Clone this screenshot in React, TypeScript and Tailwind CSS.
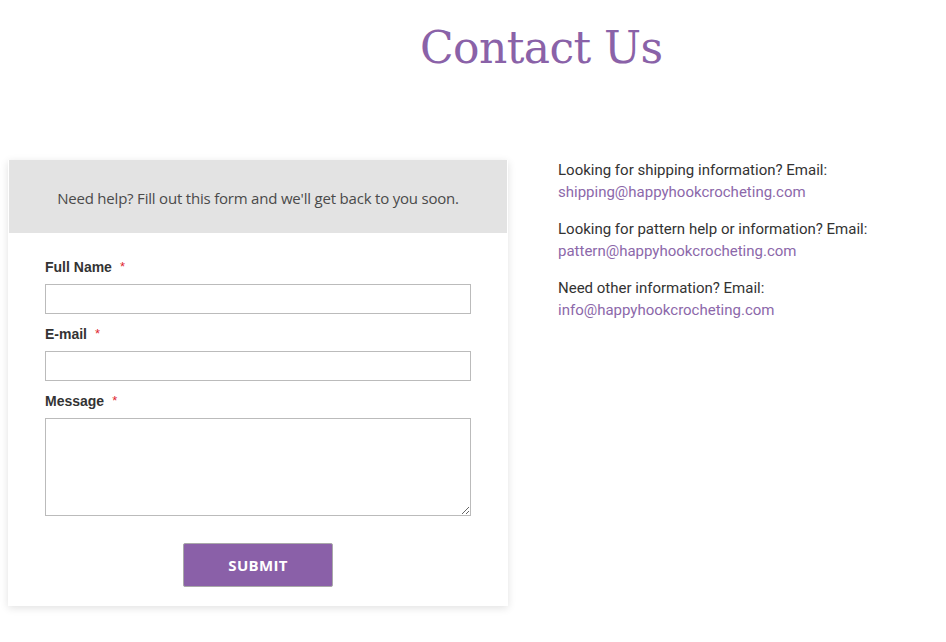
export default function App() {
  const fields = [
    { label: "Full Name", type: "input" },
    { label: "E-mail", type: "input" },
    { label: "Message", type: "textarea" },
  ];

  const contacts = [
    {
      text: "Looking for shipping information? Email:",
      email: "shipping@happyhookcrocheting.com",
    },
    {
      text: "Looking for pattern help or information? Email:",
      email: "pattern@happyhookcrocheting.com",
    },
    {
      text: "Need other information? Email:",
      email: "info@happyhookcrocheting.com",
    },
  ];

  return (
    <div className="min-h-[642px] w-[946px] bg-white">
      <h1 className="pt-[18px] pl-[420px] text-[44px] leading-[60px] tracking-[-0.6px] text-[#8a62a8] [font-family:'DejaVu_Serif',serif]">
        Contact Us
      </h1>

      <div className="mt-[82px] flex items-start">
        <div className="ml-[8px] w-[500px] bg-white shadow-[0_2px_8px_rgba(0,0,0,0.12)]">
          <div className="mx-[1px] flex h-[73px] items-center justify-center bg-[#e3e3e3]">
            <p className="pt-[3px] text-[15px] text-[#4a4a4a] [font-family:'Open_Sans',sans-serif] tracking-[-0.2px]">
              Need help? Fill out this form and we'll get back to you soon.
            </p>
          </div>

          <form className="flex flex-col px-[37px] pt-[25px] pb-[19px] [font-family:'Liberation_Sans',sans-serif]">
            {fields.map((f, i) => (
              <div key={f.label} className={i === 0 ? "" : "mt-[11px]"}>
                <label className="flex h-[18px] items-center text-[14px] font-bold text-[#333]">
                  {f.label}
                  <span className="ml-[8px] text-[13px] font-normal text-[#e0262e]">*</span>
                </label>
                {f.type === "input" ? (
                  <input className="mt-[8px] block h-[30px] w-[426px] border border-[#bbbbbb] bg-white px-2 text-sm outline-none" />
                ) : (
                  <textarea className="mt-[8px] block h-[98px] w-[426px] resize-y border border-[#bbbbbb] bg-white px-2 text-sm outline-none" />
                )}
              </div>
            ))}
            <div className="mt-[27px] flex justify-center">
              <button
                type="button"
                className="h-[44px] w-[150px] rounded-[2px] border border-[#a9a9a9] bg-[#8a60a8] text-[15px] font-bold tracking-[0.3px] text-white [font-family:'Open_Sans',sans-serif]"
              >
                SUBMIT
              </button>
            </div>
          </form>
        </div>

        <div className="-mt-[1px] ml-[50px] flex flex-col gap-[15px] text-[15px] leading-[22px] [font-family:Roboto,sans-serif]">
          {contacts.map((c) => (
            <div key={c.email}>
              <p className="text-[#333]">{c.text}</p>
              <a className="text-[#8c68aa]" href="#">
                {c.email}
              </a>
            </div>
          ))}
        </div>
      </div>
    </div>
  );
}
